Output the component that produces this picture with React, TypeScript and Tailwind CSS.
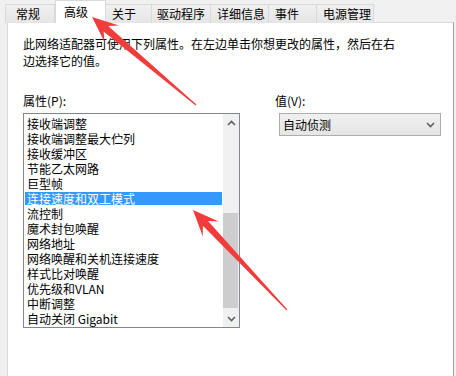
import React from "react";

const tabs = [
  { label: "常规", w: "w-[50px]", pl: "pl-[10px]" },
  { label: "高级", w: "w-[51px]", pl: "pl-[8px]", active: true },
  { label: "关于", w: "w-[47px]", pl: "pl-[6px]" },
  { label: "驱动程序", w: "w-[60px]", pl: "pl-[5px]" },
  { label: "详细信息", w: "w-[59px]", pl: "pl-[6px]" },
  { label: "事件", w: "w-[49px]", pl: "pl-[6px]" },
  { label: "电源管理", w: "w-[58px]", pl: "pl-[6px]" },
];

const props = [
  "接收端调整",
  "接收端调整最大伫列",
  "接收缓冲区",
  "节能乙太网路",
  "巨型帧",
  "连接速度和双工模式",
  "流控制",
  "魔术封包唤醒",
  "网络地址",
  "网络唤醒和关机连接速度",
  "样式比对唤醒",
  "优先级和VLAN",
  "中断调整",
  "自动关闭 Gigabit",
];

// annotation arrow polygon, tail -> tip
function arrowPoints(tx: number, ty: number, px: number, py: number) {
  const dx = px - tx;
  const dy = py - ty;
  const len = Math.hypot(dx, dy);
  const ux = dx / len;
  const uy = dy / len;
  const nx = -uy;
  const ny = ux;
  const h = 26;
  const w = 11;
  const nh = h * 0.7;
  const b = 3.5;
  const pts = [
    [px, py],
    [px - ux * h + nx * w, py - uy * h + ny * w],
    [px - ux * nh + nx * b, py - uy * nh + ny * b],
    [tx + nx * 0.6, ty + ny * 0.6],
    [tx - nx * 0.6, ty - ny * 0.6],
    [px - ux * nh - nx * b, py - uy * nh - ny * b],
    [px - ux * h - nx * w, py - uy * h - ny * w],
  ];
  return pts.map((p) => p.map((v) => v.toFixed(1)).join(",")).join(" ");
}

function Chevron({ up }: { up?: boolean }) {
  return (
    <svg width="9" height="6" viewBox="0 0 9 6" className="text-[#606060]">
      <path
        d={up ? "M1 5 L4.5 1.5 L8 5" : "M1 1 L4.5 4.5 L8 1"}
        fill="none"
        stroke="currentColor"
        strokeWidth="1.6"
      />
    </svg>
  );
}

export default function App() {
  return (
    <div
      className="relative w-[456px] h-[376px] overflow-hidden bg-[#f0f0f0] text-black text-[12px] flex flex-col"
      style={{ fontFamily: '"Noto Sans CJK SC", "Liberation Sans", sans-serif' }}
    >
      {/* Tab strip */}
      <div className="flex items-end h-[23px] pl-[5px] relative z-10">
        {tabs.map((t) =>
          t.active ? (
            <div
              key={t.label}
              className={`${t.w} ${t.pl} h-[23px] bg-white border border-b-0 border-[#d9d9d9] leading-[21px]`}
            >
              {t.label}
            </div>
          ) : (
            <div
              key={t.label}
              className={`${t.w} ${t.pl} h-[19px] bg-gradient-to-b from-[#f0f0f0] to-[#e5e5e5] border border-b-0 border-[#d9d9d9] -ml-px first:ml-0 leading-[18px]`}
            >
              {t.label}
            </div>
          )
        )}
      </div>

      {/* Panel */}
      <div className="flex-1 mx-[7px] mr-[2px] -mt-px bg-white border border-b-0 border-[#d9d9d9] border-r-[#a0a0a0] pl-[15px] pt-[12px]">
        <p className="leading-[17px]">
          此网络适配器可使用下列属性。在左边单击你想更改的属性，然后在右
          <br />
          边选择它的值。
        </p>

        <div className="flex mt-[23px]">
          {/* Property list */}
          <div className="w-[217px] flex flex-col">
            <div className="leading-[17px]">属性(P):</div>
            <div className="mt-[4px] h-[215px] border border-[#828790] flex">
              <div className="flex-1 pt-[2px]">
                {props.map((p, i) =>
                  i === 5 ? (
                    <div key={p} className="h-[15px] flex items-center">
                      <div className="mx-px w-full h-[13px] bg-[#3399ff] text-white pl-[2px] leading-[13px] whitespace-nowrap">
                        {p}
                      </div>
                    </div>
                  ) : (
                    <div key={p} className="h-[15px] leading-[15px] pl-[3px] whitespace-nowrap">
                      {p}
                    </div>
                  )
                )}
              </div>
              <div className="w-[16px] bg-[#f0f0f0] flex flex-col">
                <div className="h-[17px] flex items-center justify-center">
                  <Chevron up />
                </div>
                <div className="flex-1 flex flex-col pt-[82px] pb-[2px]">
                  <div className="flex-1 mr-px bg-[#cdcdcd]" />
                </div>
                <div className="h-[17px] flex items-center justify-center">
                  <Chevron />
                </div>
              </div>
            </div>
          </div>

          {/* Value */}
          <div className="ml-[35px] flex flex-col">
            <div className="leading-[17px]">值(V):</div>
            <div className="mt-[4px] ml-[4px] w-[162px] h-[23px] border border-[#adadad] bg-gradient-to-b from-[#f0f0f0] to-[#e5e5e5] flex items-center justify-between pl-[3px] pr-[5px]">
              <span className="leading-[15px]">自动侦测</span>
              <Chevron />
            </div>
          </div>
        </div>
      </div>

      {/* Red annotation arrows */}
      <svg
        className="absolute inset-0 pointer-events-none z-20"
        width="456"
        height="376"
        viewBox="0 0 456 376"
      >
        <polygon points={arrowPoints(196, 105, 92, 17)} fill="#f23c3c" />
        <polygon points={arrowPoints(287, 310, 193, 210)} fill="#f23c3c" />
      </svg>
    </div>
  );
}
